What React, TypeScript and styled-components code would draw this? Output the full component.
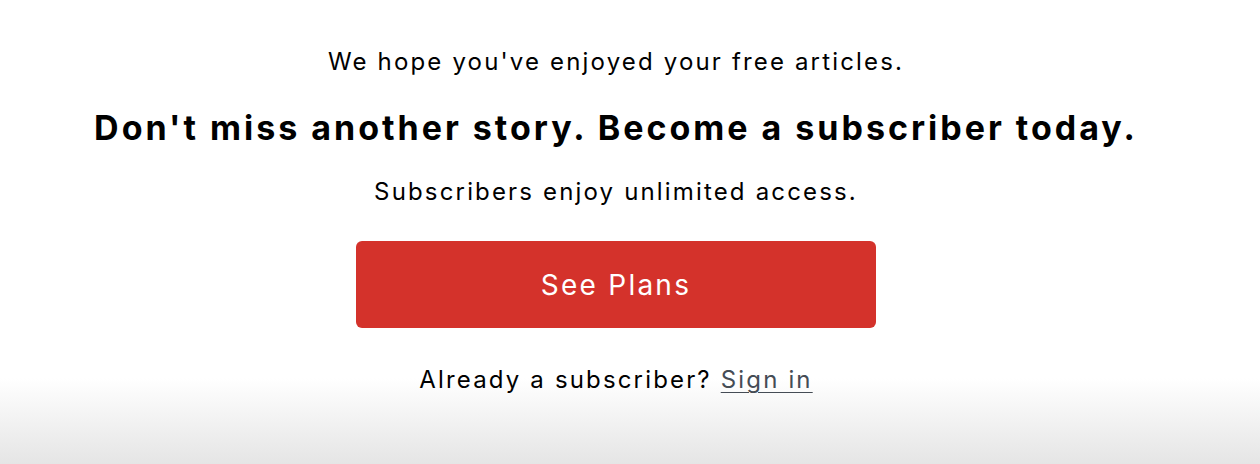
import React from 'react';
import styled, { createGlobalStyle } from 'styled-components';

const GlobalStyle = createGlobalStyle`
  html, body {
    margin: 0;
    padding: 0;
  }
  body {
    font-family: Inter, 'Liberation Sans', sans-serif;
    color: #000000;
  }
`;

const Wrapper = styled.div`
  height: 464px;
  display: flex;
  flex-direction: column;
  align-items: center;
  padding: 46px 28px 0 0;
  box-sizing: border-box;
  background: linear-gradient(
    to bottom,
    #ffffff 0,
    #ffffff 378px,
    #e5e5e5 464px
  );
`;

const Text = styled.p<{ $gap?: number }>`
  margin: ${(p) => p.$gap ?? 0}px 0 0;
  font-size: 24px;
  line-height: 32px;
  font-weight: 400;
  letter-spacing: 0.09em;
  text-align: center;
`;

const Heading = styled.h2`
  margin: 28px 0 0;
  font-size: 34px;
  line-height: 44px;
  font-weight: 700;
  letter-spacing: 0.088em;
  text-align: center;
`;

const PlansButton = styled.button`
  margin-top: 33px;
  width: 520px;
  height: 87px;
  border: none;
  border-radius: 6px;
  background: #d4322b;
  color: #ffffff;
  font-family: inherit;
  font-size: 28px;
  letter-spacing: 0.08em;
  cursor: pointer;
`;

const SignIn = styled.a`
  color: #454c55;
  text-decoration: underline;
  text-underline-offset: 4px;
  text-decoration-thickness: 1px;
`;

export default function App() {
  return (
    <>
      <GlobalStyle />
      <Wrapper>
        <Text>We hope you've enjoyed your free articles.</Text>
        <Heading>Don't miss another story. Become a subscriber today.</Heading>
        <Text $gap={26}>Subscribers enjoy unlimited access.</Text>
        <PlansButton>See Plans</PlansButton>
        <Text $gap={36}>
          Already a subscriber? <SignIn href="#">Sign in</SignIn>
        </Text>
      </Wrapper>
    </>
  );
}
